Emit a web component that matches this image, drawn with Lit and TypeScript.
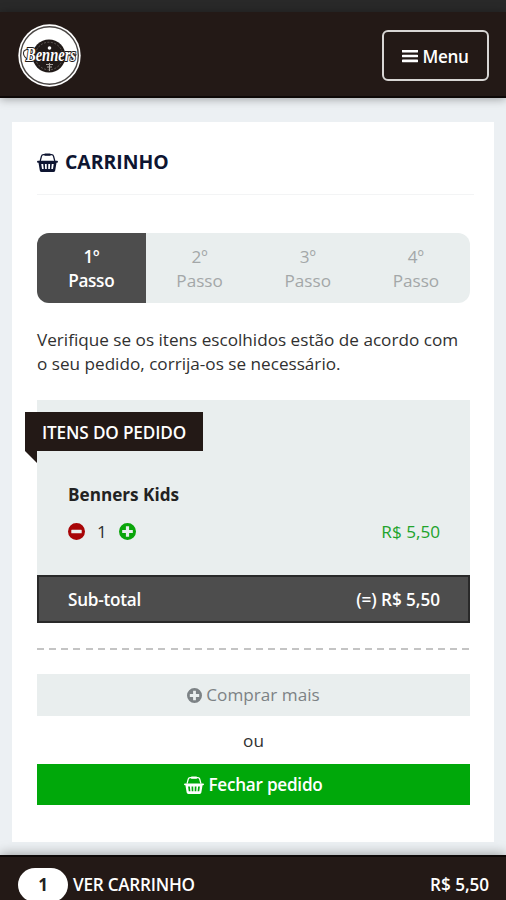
import { LitElement, html, svg, css } from "lit";
import { customElement, property } from "lit/decorators.js";
import { classMap } from "lit/directives/class-map.js";

const glyphs: Record<string, unknown> = {
  menu: svg`<path d="M1 2.5h14M1 8h14M1 13.5h14" stroke="currentColor" stroke-width="3" stroke-linecap="round"/>`,
  plus: svg`<path fill="currentColor" fill-rule="evenodd" d="M8 0a8 8 0 1 0 0 16A8 8 0 0 0 8 0ZM6.5 3h3v3.500H13v3H9.500V13h-3V9.500H3v-3h3.500Z"/>`,
  minus: svg`<path fill="currentColor" fill-rule="evenodd" d="M8 0a8 8 0 1 0 0 16A8 8 0 0 0 8 0ZM3.600 6.300h8.800q.5 0 .5.500v2.400q0 .5-.5.5H3.600q-.5 0-.5-.5V6.800q0-.5.5-.5Z"/>`,
};

@customElement("ui-glyph")
class UiGlyph extends LitElement {
  @property() name = "plus";
  static styles = css`
    :host { display: block; }
    svg { display: block; width: 100%; height: 100%; }
  `;
  render() {
    return html`<svg viewBox="0 0 16 16" preserveAspectRatio="none" fill="none">${glyphs[this.name]}</svg>`;
  }
}

@customElement("shop-basket")
class ShopBasket extends LitElement {
  static styles = css`
    :host { display: block; }
    svg { display: block; width: 100%; height: 100%; }
  `;
  render() {
    return html`<svg viewBox="0 0 21 19" preserveAspectRatio="none" fill="none">
      <path d="M3.200 8 4.500 3.200Q4.900 1.700 6.400 1.700h8.200q1.500 0 1.900 1.500L17.800 8" stroke="currentColor" stroke-width="1.300"/>
      <rect x="7.200" y=".6" width="6.600" height="2.200" rx="1" fill="currentColor"/>
      <path fill="currentColor" fill-rule="evenodd" d="M1 7.800h19q1 0 1 1t-1 1h-.5l-1.300 7.700Q17.900 19 16.400 19H4.600q-1.500 0-1.800-1.500L1.500 9.800H1q-1 0-1-1t1-1ZM4.300 11l.7 5h1.700l-.5-5ZM7.900 11l.2 5h1.700l-.1-5ZM11.300 11l-.1 5h1.700l.2-5ZM14.800 11l-.5 5H16l.7-5Z"/>
    </svg>`;
  }
}

@customElement("brand-seal")
class BrandSeal extends LitElement {
  static styles = css`
    :host { display: block; width: 64px; height: 64px; margin-top: 4px; }
    svg { display: block; overflow: visible; }
    .script { font: italic 700 18px "Liberation Serif", serif; }
  `;
  render() {
    return html`<svg width="64" height="64" viewBox="0 0 64 64">
      <circle cx="31.500" cy="31.500" r="31.200" fill="#fff"/>
      <circle cx="31.500" cy="31.500" r="28.800" fill="none" stroke="#4a4644" stroke-width="1.400"/>
      <circle cx="31" cy="32" r="16.500" fill="#211a18"/>
      <circle cx="31" cy="32" r="13.800" fill="none" stroke="#67615e" stroke-width=".9" stroke-dasharray="2 1.500"/>
      <circle cx="31.500" cy="24" r="1.800" fill="#fff"/>
      <path d="M28 40.500h7M29 43h5M31.500 39v8" stroke="#aaa5a1" stroke-width="1.100"/>
      <path d="M9 35Q4 31 6 27q3-3 8-1M54 35q4-2 4-5" stroke="#3a3431" stroke-width="1.100" fill="none"/>
      <text class="script" x="8" y="37" textLength="50" lengthAdjust="spacingAndGlyphs" fill="#fff" stroke="#211a18" stroke-width="1.900" paint-order="stroke">Benners</text>
    </svg>`;
  }
}

@customElement("app-root")
class AppRoot extends LitElement {
  private steps = ["1º", "2º", "3º", "4º"];

  static styles = css`
    :host {
      display: flex; flex-direction: column; height: 900px; overflow: hidden;
      background: #ecf0f3; color: #303030;
      font: 17.15px/23.5px "Open Sans", "Noto Sans", sans-serif;
    }
    .status { flex: none; height: 12px; background: #292929; }
    .header {
      flex: none; height: 86px; box-sizing: border-box; padding: 0 17px 0 18px;
      display: flex; align-items: center; justify-content: space-between;
      background: #231916; border-bottom: 2px solid #0d0807; box-shadow: 0 1px 9px rgba(0,0,0,.35);
    }
    .menu {
      box-sizing: border-box; width: 107px; height: 51px; margin-top: 3px; padding-top: 2px;
      border: 2px solid #d8d6d4; border-radius: 6px;
      display: flex; align-items: center; justify-content: center; gap: 4px;
      color: #fff; font-weight: 600; letter-spacing: -.35px;
    }
    .menu ui-glyph { width: 16px; height: 14px; margin-bottom: 1px; }
    .card {
      flex: none; box-sizing: border-box; height: 720px; margin: 24px 12px 0 12px; padding: 0 24px 0 25px;
      background: #fff; display: flex; flex-direction: column;
    }
    .title {
      height: 73px; box-sizing: border-box; padding-top: 8px; margin: 0 -4px 0 0; border-bottom: 1px solid #f3f4f5;
      display: flex; align-items: center; gap: 7px;
      color: #0e1531; font-weight: 700; font-size: 19.4px;
    }
    .title shop-basket { width: 21px; height: 19px; }
    .steps {
      margin-top: 38px; height: 70px; border-radius: 12px; overflow: hidden;
      display: grid; grid-template-columns: 108.5px repeat(3, 1fr); background: #e9eeee;
    }
    .step { padding-top: 12px; line-height: 23.5px; text-align: center; color: #a3a7a8; }
    .current { background: #4d4d4d; color: #fff; font-weight: 600; letter-spacing: -.3px; }
    .hint { margin-top: 25px; white-space: nowrap; }
    .items { margin-top: 25px; height: 175px; padding-top: 12px; box-sizing: border-box; background: #e9eeee; }
    .ribbon {
      position: relative; width: 178px; height: 39px; margin-left: -12px; box-sizing: border-box;
      padding-left: 17px; line-height: 41px; background: #231916; color: #fff; font-weight: 600; white-space: nowrap;
      letter-spacing: -.15px;
    }
    .ribbon::after {
      content: ""; position: absolute; left: 0; top: 100%;
      border-top: 12px solid #231916; border-left: 12px solid transparent;
    }
    .body { padding: 0 30px 0 31px; }
    .name { margin-top: 32px; font-weight: 700; color: #222; }
    .line { display: flex; align-items: center; margin-top: 13px; }
    .line ui-glyph { width: 17px; height: 17px; }
    .less { color: #a80507; }
    .more { color: #0aa50a; }
    .count { width: 34px; text-align: center; }
    .price { margin-left: auto; color: #21a32b; }
    .subtotal {
      box-sizing: border-box; height: 48px; border: 2px solid #292929; background: #4d4d4d; color: #fff;
      padding: 2px 28px 0 29px; display: flex; align-items: center; justify-content: space-between;
      font-weight: 600; letter-spacing: -.25px;
    }
    .sum { letter-spacing: -.05px; }
    .dashes {
      margin-top: 25px; height: 2px; flex: none;
      background: repeating-linear-gradient(90deg, #c4c4c4 0 7px, transparent 7px 12.15px);
    }
    .action { display: flex; align-items: center; justify-content: center; flex: none; gap: 4px; }
    .again { margin-top: 24px; height: 42px; background: #e9eeee; color: #7c8285; }
    .again ui-glyph { width: 15px; height: 15px; }
    .or { height: 48px; line-height: 49px; text-align: center; }
    .finish { height: 41px; background: #00a80a; color: #fff; font-weight: 600; letter-spacing: -.25px; }
    .finish shop-basket { width: 20px; height: 18px; }
    .footer {
      flex: none; box-sizing: border-box; height: 60px; margin-top: 13px; padding: 11px 17px 0 18px;
      display: flex; align-items: flex-start; background: #231916; color: #fff; font-weight: 600;
      border-top: 2px solid #0d0807; box-shadow: 0 0 12px rgba(0,0,0,.4); line-height: 34px; letter-spacing: -.25px;
    }
    .badge { width: 50px; height: 34px; border-radius: 17px; background: #fff; color: #222; text-align: center; font-weight: 700; }
    .view { margin-left: 5px; }
    .total { margin-left: auto; letter-spacing: -.05px; }
  `;

  render() {
    return html`
      <div class="status"></div>
      <header class="header">
        <brand-seal></brand-seal>
        <div class="menu"><ui-glyph name="menu"></ui-glyph><span>Menu</span></div>
      </header>
      <main class="card">
        <div class="title"><shop-basket></shop-basket><span>CARRINHO</span></div>
        <div class="steps">
          ${this.steps.map((n, i) => html`<div class=${classMap({ step: true, current: i === 0 })}>${n}<br>Passo</div>`)}
        </div>
        <div class="hint">Verifique se os itens escolhidos estão de acordo com<br>o seu pedido, corrija-os se necessário.</div>
        <section class="items">
          <div class="ribbon">ITENS DO PEDIDO</div>
          <div class="body">
            <div class="name">Benners Kids</div>
            <div class="line">
              <ui-glyph class="less" name="minus"></ui-glyph><span class="count">1</span><ui-glyph class="more" name="plus"></ui-glyph>
              <span class="price">R$ 5,50</span>
            </div>
          </div>
        </section>
        <div class="subtotal"><span>Sub-total</span><span class="sum">(=) R$ 5,50</span></div>
        <div class="dashes"></div>
        <div class="action again"><ui-glyph name="plus"></ui-glyph><span>Comprar mais</span></div>
        <div class="or">ou</div>
        <div class="action finish"><shop-basket></shop-basket><span>Fechar pedido</span></div>
      </main>
      <footer class="footer">
        <span class="badge">1</span><span class="view">VER CARRINHO</span><span class="total">R$ 5,50</span>
      </footer>
    `;
  }
}
